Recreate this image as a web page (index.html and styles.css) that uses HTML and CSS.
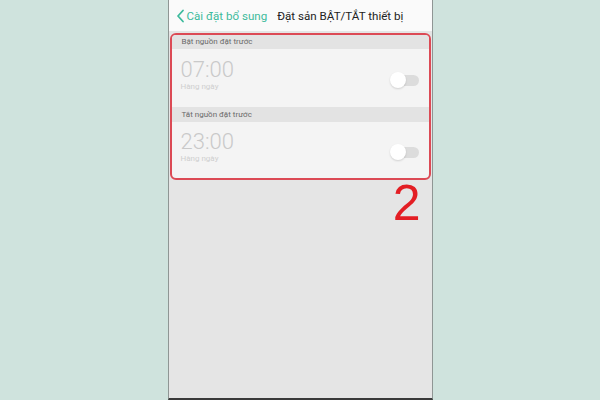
FILE: index.html
```html
<!DOCTYPE html>
<html lang="vi">
<head>
    <meta charset="UTF-8">
    <meta name="viewport" content="width=device-width, initial-scale=1.0">
    <title>Đặt sẵn BẬT/TẮT thiết bị</title>
    <link rel="stylesheet" href="styles.css">
</head>
<body>
    <div class="phone">
        <div class="topbar">
            <svg class="back" width="9" height="14" viewBox="0 0 9 14">
                <path d="M7 1.5 L2 7 L7 12.5" fill="none" stroke="#3dba9c" stroke-width="1.8" stroke-linecap="round" stroke-linejoin="round"/>
            </svg>
            <span class="back-label">Cài đặt bổ sung</span>
            <span class="title">Đặt sản BẬT/TẮT thiết bị</span>
        </div>

        <div class="panel">
            <div class="group-head">Bật nguồn đặt trước</div>
            <div class="row">
                <div>
                    <div class="time">07:00</div>
                    <div class="repeat">Hàng ngày</div>
                </div>
                <div class="switch"><span class="knob"></span></div>
            </div>
            <div class="group-head">Tắt nguồn đặt trước</div>
            <div class="row last">
                <div>
                    <div class="time">23:00</div>
                    <div class="repeat">Hàng ngày</div>
                </div>
                <div class="switch"><span class="knob"></span></div>
            </div>
        </div>

        <div class="step">2</div>
    </div>
</body>
</html>
```

FILE: styles.css
```css
body {
    margin: 0;
    height: 400px;
    background: #cfe3dd;
    font-family: 'Roboto', 'Liberation Sans', sans-serif;
    display: flex;
    justify-content: center;
}

.phone {
    width: 263px;
    height: 398px;
    background-color: #e5e5e5;
    border-left: 1px solid #8f9694;
    border-right: 1px solid #8f9694;
    border-bottom: 2px solid #3a3a3a;
}

.topbar {
    height: 31px;
    background-color: #fafafa;
    display: flex;
    align-items: center;
    padding-left: 7px;
    font-size: 11.6px;
}

.back {
    margin-right: 2px;
}

.back-label {
    color: #3dba9c;
    margin-right: 10px;
}

.title {
    color: #222;
}

.panel {
    margin: 2px 1px 0;
    border: 2px solid #dc4a55;
    border-radius: 6px;
    overflow: hidden;
    background-color: #f4f4f4;
}

.group-head {
    height: 14px;
    line-height: 14px;
    padding-left: 10px;
    font-size: 8px;
    color: #6a6a6a;
    background-color: #e3e3e3;
}

.group-head + .row + .group-head {
    height: 15px;
    line-height: 15px;
}

.row {
    height: 58px;
    display: flex;
    align-items: center;
    justify-content: space-between;
    padding: 0 10px 0 9px;
}

.row.last {
    height: 56px;
}

.time {
    font-size: 22px;
    font-weight: 300;
    color: #c9c9c9;
    line-height: 24px;
    margin-top: -7px;
}

.repeat {
    font-size: 8px;
    color: #cfcfcf;
}

.switch {
    position: relative;
    width: 27px;
    height: 11px;
    border-radius: 6px;
    background-color: #dcdcdc;
    margin-top: 4px;
}

.knob {
    position: absolute;
    left: -2px;
    top: -3px;
    width: 16px;
    height: 16px;
    border-radius: 50%;
    background-color: #fff;
    box-shadow: 0 1px 2px rgba(0, 0, 0, 0.15);
}

.step {
    text-align: right;
    padding-right: 11px;
    font-family: 'Liberation Sans', sans-serif;
    font-size: 50px;
    line-height: 46px;
    color: #e31e24;
    margin-top: 0;
}
```
